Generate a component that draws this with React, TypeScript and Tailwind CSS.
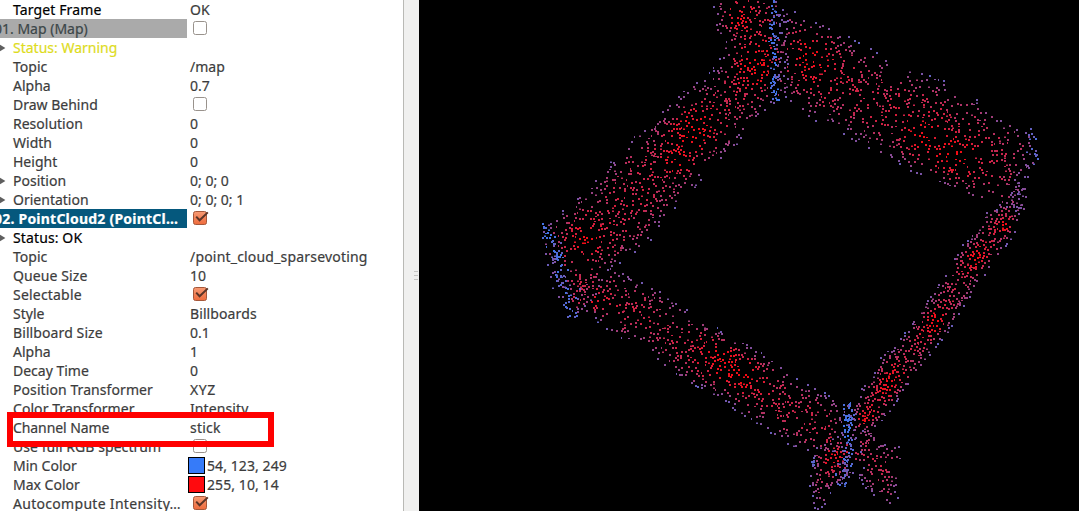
import React from "react";

type Pt = [number, number];
type Kind = "group" | "selected" | "warning" | "strong" | "plain";
interface Row {
  name: string;
  value?: string;
  check?: boolean;
  swatch?: "min" | "max";
  arrow?: boolean;
  kind?: Kind;
  track?: string;
  valueTrack?: string;
}

const rows: Row[] = [
  { name: "Target Frame", value: "OK", kind: "strong", track: "tracking-[0.12px]" },
  { name: "01. Map (Map)", check: false, kind: "group" },
  { name: "Status: Warning", arrow: true, kind: "warning" },
  { name: "Topic", value: "/map" },
  { name: "Alpha", value: "0.7" },
  { name: "Draw Behind", check: false },
  { name: "Resolution", value: "0" },
  { name: "Width", value: "0" },
  { name: "Height", value: "0" },
  { name: "Position", value: "0; 0; 0", arrow: true },
  { name: "Orientation", value: "0; 0; 0; 1", arrow: true },
  { name: "02. PointCloud2 (PointCl…", check: true, kind: "selected", track: "tracking-[0.22px]" },
  { name: "Status: OK", arrow: true, kind: "strong", track: "tracking-[0.12px]" },
  { name: "Topic", value: "/point_cloud_sparsevoting", valueTrack: "tracking-[0.19px]" },
  { name: "Queue Size", value: "10", track: "tracking-[0.1px]" },
  { name: "Selectable", check: true, track: "tracking-[0.2px]" },
  { name: "Style", value: "Billboards", valueTrack: "tracking-[0.1px]" },
  { name: "Billboard Size", value: "0.1", track: "tracking-[0.1px]" },
  { name: "Alpha", value: "1" },
  { name: "Decay Time", value: "0" },
  { name: "Position Transformer", value: "XYZ", track: "tracking-[0.08px]", valueTrack: "tracking-[0.6px]" },
  { name: "Color Transformer", value: "Intensity", track: "tracking-[0.06px]", valueTrack: "tracking-[0.1px]" },
  { name: "Channel Name", value: "stick", track: "-tracking-[0.08px]", valueTrack: "tracking-[0.2px]" },
  { name: "Use full RGB spectrum", check: false, track: "tracking-[0.06px]" },
  { name: "Min Color", value: "54, 123, 249", swatch: "min", valueTrack: "tracking-[0.08px]" },
  { name: "Max Color", value: "255, 10, 14", swatch: "max", valueTrack: "tracking-[0.08px]" },
  { name: "Autocompute Intensity…", check: true, track: "tracking-[0.3px]" },
];

const nameStyle: Record<Kind, string> = {
  group: "bg-[#aaaaaa] text-[#3c4648] pl-0",
  selected: "bg-[#05587d] text-white font-bold pl-0",
  warning: "text-[#dedc1e] pl-[13px]",
  strong: "text-black pl-[13px]",
  plain: "text-[#3c3c3c] pl-[13px]",
};

function CheckBox({ on }: { on: boolean }) {
  return (
    <svg width="17" height="15" viewBox="0 0 17 15" className="ml-[6px] block shrink-0">
      <defs>
        <linearGradient id="tick-fill" x1="0" y1="0" x2="0" y2="1">
          <stop offset="0" stopColor="#f69a74" />
          <stop offset="1" stopColor="#ee6b3c" />
        </linearGradient>
      </defs>
      <rect x="0.5" y="0.5" width="13" height="13" rx="2" fill={on ? "url(#tick-fill)" : "#fff"} stroke={on ? "#a5573a" : "#99928c"} />
      {on && <path d="M3.2 5.6 6.6 9.3 14.8 1.4" fill="none" stroke="#5b3427" strokeWidth="2" />}
    </svg>
  );
}

function PropertyRow({ row }: { row: Row }) {
  const kind = row.kind ?? "plain";
  const shifted = kind === "group" || kind === "selected";
  return (
    <div className="flex h-[19px] shrink-0">
      <div className={`relative flex h-[19px] w-[187px] items-center overflow-hidden whitespace-nowrap ${nameStyle[kind]}`}>
        {row.arrow && (
          <svg width="6" height="8" viewBox="0 0 6 8" className="absolute left-0 top-[6px]">
            <path d="M0 0.8 5.4 4 0 7.2z" fill="#5f5f5f" />
          </svg>
        )}
        <span className={`${shifted ? "-ml-[6px]" : ""} ${row.track ?? ""}`}>{row.name}</span>
      </div>
      <div className={`flex h-[19px] items-center whitespace-nowrap text-[#3c3c3c] ${row.value && !row.swatch ? "pl-[3px]" : ""}`}>
        {row.check !== undefined && <CheckBox on={row.check} />}
        {row.swatch && (
          <span className={`mr-[2px] ml-px h-[17px] w-[17px] border border-black ${row.swatch === "min" ? "bg-[#367bf9]" : "bg-[#ff0a0e]"}`} />
        )}
        <span className={row.valueTrack ?? ""}>{row.value}</span>
      </div>
    </div>
  );
}

/* ---------- point cloud ---------- */

const upperLeft: Pt[] = [[711, 0], [713, 32], [724, 36], [717, 62], [703, 78], [690, 83], [667, 104], [655, 116], [638, 130], [622, 147], [602, 169], [588, 184], [573, 198], [553, 216], [541, 224], [541, 245], [547, 268], [556, 278], [562, 302], [576, 316], [600, 290], [613, 268], [632, 254], [650, 241], [658, 226], [671, 211], [686, 194], [698, 183], [712, 165], [733, 147], [743, 134], [753, 123], [764, 111], [772, 103], [789, 96], [788, 0]];
const upperRight: Pt[] = [[776, 0], [787, 1], [797, 14], [805, 16], [840, 31], [853, 39], [868, 46], [890, 61], [922, 71], [955, 84], [975, 97], [990, 109], [1010, 120], [1020, 127], [1032, 130], [1037, 147], [1030, 162], [1024, 185], [1017, 206], [1000, 211], [984, 206], [960, 195], [935, 183], [912, 172], [895, 162], [872, 150], [848, 138], [835, 126], [810, 119], [798, 108], [785, 100], [774, 102]];
const right: Pt[] = [[1020, 180], [1021, 205], [1016, 227], [1010, 239], [1000, 253], [985, 275], [968, 298], [955, 319], [945, 335], [935, 346], [925, 361], [915, 373], [905, 388], [895, 402], [886, 415], [868, 432], [845, 428], [856, 399], [861, 387], [872, 374], [880, 355], [892, 348], [907, 328], [920, 309], [935, 288], [947, 267], [957, 250], [970, 236], [977, 224], [988, 209], [1004, 200]];
const lowerLeft: Pt[] = [[612, 266], [637, 280], [652, 285], [665, 294], [680, 305], [695, 315], [707, 321], [725, 332], [740, 340], [755, 349], [768, 355], [785, 366], [800, 382], [815, 386], [831, 397], [846, 404], [842, 450], [812, 453], [790, 445], [775, 436], [755, 422], [738, 413], [722, 398], [700, 388], [686, 382], [672, 373], [657, 360], [636, 343], [618, 338], [607, 330], [590, 316], [575, 308], [580, 280]];
const legs: Pt[] = [[812, 448], [808, 480], [811, 500], [816, 512], [825, 505], [830, 492], [840, 484], [855, 470], [863, 486], [876, 497], [890, 507], [899, 512], [897, 486], [905, 470], [900, 445], [889, 443], [879, 440], [872, 426], [844, 430], [830, 438]];

function createRandom(seed: number) {
  let s = seed;
  return () => {
    s = (s + 0x6d2b79f5) | 0;
    let t = Math.imul(s ^ (s >>> 15), 1 | s);
    t = (t + Math.imul(t ^ (t >>> 7), 61 | t)) ^ t;
    return ((t ^ (t >>> 14)) >>> 0) / 4294967296;
  };
}

function contains(poly: Pt[], x: number, y: number) {
  let inside = false;
  for (let i = 0, j = poly.length - 1; i < poly.length; j = i++) {
    const [ax, ay] = poly[i];
    const [bx, by] = poly[j];
    if (ay > y !== by > y && x < ((bx - ax) * (y - ay)) / (by - ay) + ax) inside = !inside;
  }
  return inside;
}

function segmentDistance(x: number, y: number, a: Pt, b: Pt) {
  const dx = b[0] - a[0];
  const dy = b[1] - a[1];
  const k = Math.max(0, Math.min(1, ((x - a[0]) * dx + (y - a[1]) * dy) / (dx * dx + dy * dy)));
  return Math.hypot(x - a[0] - k * dx, y - a[1] - k * dy);
}

function edgeDistance(poly: Pt[], x: number, y: number) {
  let best = 1e9;
  for (let i = 0, j = poly.length - 1; i < poly.length; j = i++) {
    if (poly[i][1] <= 0 && poly[j][1] <= 0) continue;
    best = Math.min(best, segmentDistance(x, y, poly[i], poly[j]));
  }
  return best;
}

// x, y, radius of the places with the strongest intensity
const hotSpots: [number, number, number][] = [
  [692, 130, 22], [757, 62, 24], [808, 55, 26], [950, 158, 24], [922, 138, 20], [584, 238, 16],
  [589, 300, 15], [724, 358, 26], [740, 373, 20], [830, 452, 16], [678, 158, 14], [735, 20, 14],
  [1005, 227, 10], [975, 255, 14], [932, 322, 16], [890, 382, 18], [865, 418, 14],
];

const STEPS = 24;

function buildCloud() {
  const rand = createRandom(4127);
  const bright: string[] = Array(STEPS + 1).fill("");
  const dim: string[] = Array(STEPS + 1).fill("");
  const placed = new Map<string, Pt[]>();

  const free = (x: number, y: number, gap: number) => {
    const cx = Math.floor(x / 8);
    const cy = Math.floor(y / 8);
    for (let i = -1; i <= 1; i++)
      for (let j = -1; j <= 1; j++)
        for (const p of placed.get(`${cx + i},${cy + j}`) ?? [])
          if (Math.hypot(p[0] - x, p[1] - y) < gap) return false;
    return true;
  };

  const put = (px: number, py: number, t: number) => {
    const x = Math.round(px);
    const y = Math.round(py);
    const key = `${Math.floor(x / 8)},${Math.floor(y / 8)}`;
    placed.set(key, [...(placed.get(key) ?? []), [x, y]]);
    const c = Math.round(Math.max(0, Math.min(1, t)) * STEPS);
    const shape = rand();
    if (shape < 0.8) bright[c] += `M${x} ${y}h2v2h-2z`;
    else if (shape < 0.92) {
      bright[c] += `M${x} ${y + 1}h2v1h-2z`;
      dim[c] += `M${x} ${y}h2v1h-2z`;
    } else if (shape < 0.96) bright[c] += `M${x} ${y}h2v1h-2z`;
    else bright[c] += `M${x} ${y}h1v2h-1z`;
  };

  const fill = (poly: Pt[], count: number, gap: number, falloff: number) => {
    const xs = poly.map((p) => p[0]);
    const ys = poly.map((p) => p[1]);
    const x0 = Math.min(...xs);
    const y0 = Math.min(...ys);
    const w = Math.max(...xs) - x0;
    const h = Math.max(...ys) - y0;
    let made = 0;
    for (let tries = 0; made < count && tries < 60000; tries++) {
      const x = x0 + rand() * w;
      const y = y0 + rand() * h;
      if (!contains(poly, x, y)) continue;
      const d = edgeDistance(poly, x, y);
      let heat = 0;
      for (const [hx, hy, r] of hotSpots) heat = Math.max(heat, Math.exp(-((x - hx) ** 2 + (y - hy) ** 2) / (r * r)));
      if (rand() > 0.42 + d / 50 + heat * 0.3 || !free(x, y, gap)) continue;
      put(x, y, 0.27 + 0.5 * (1 - Math.exp(-d / falloff)) + 0.26 * heat * Math.min(1, d / 9) + (rand() - 0.5) * 0.14);
      made++;
    }
  };

  const streak = (a: Pt, b: Pt, spread: number, count: number, t: number) => {
    for (let i = 0; i < count; i++) {
      const k = rand();
      put(a[0] + (b[0] - a[0]) * k + (rand() + rand() - 1) * spread, a[1] + (b[1] - a[1]) * k + (rand() - 0.5) * 3, t + rand() * 0.16);
    }
  };

  streak([772, 0], [774, 104], 5, 62, 0);
  streak([777, 0], [781, 90], 9, 30, 0.25);
  streak([542, 224], [557, 258], 8, 30, 0);
  streak([555, 255], [574, 316], 10, 38, 0.04);
  streak([550, 240], [566, 300], 12, 22, 0.22);
  streak([849, 402], [847, 440], 7, 42, 0);
  streak([849, 438], [840, 485], 9, 38, 0.08);
  streak([850, 405], [848, 480], 16, 26, 0.25);
  streak([813, 456], [812, 466], 2, 8, 0.1);
  streak([1031, 128], [1032, 165], 7, 13, 0.1);
  streak([1026, 162], [1014, 215], 9, 34, 0.3);

  fill(upperLeft, 920, 2, 10);
  fill(upperRight, 680, 2, 12);
  fill(right, 530, 1.9, 6);
  fill(lowerLeft, 590, 2, 9);
  fill(legs, 200, 1.9, 9);
  return { bright, dim };
}

function tone(step: number, gain: number) {
  const t = step / STEPS;
  const mix = (a: number, b: number) => Math.round((a + (b - a) * t) * gain);
  return `rgb(${mix(62, 253)},${mix(124, 12)},${mix(249, 22)})`;
}

const cloud = buildCloud();

function PointCloudView() {
  return (
    <svg width="660" height="511" viewBox="419 0 660 511" shapeRendering="crispEdges" className="block">
      {cloud.dim.map((d, i) => d && <path key={`d${i}`} d={d} fill={tone(i, 0.5)} />)}
      {cloud.bright.map((d, i) => d && <path key={`b${i}`} d={d} fill={tone(i, 0.96)} />)}
    </svg>
  );
}

export default function App() {
  return (
    <div className="relative flex h-[511px] w-[1079px] overflow-hidden bg-black font-['Noto_Sans','Open_Sans',sans-serif] text-[14px] leading-[19px] [-webkit-text-stroke:0.2px]">
      <div className="flex w-[404px] shrink-0 flex-col overflow-hidden border-r border-[#b9b9b5] bg-white">
        {rows.map((row, i) => (
          <PropertyRow key={i} row={row} />
        ))}
      </div>
      <div className="flex w-[15px] shrink-0 flex-col items-end justify-center gap-[3px] bg-[#f0f0ef] pt-[40px] pr-px">
        <span className="h-px w-[4px] bg-[#c4c4c2]" />
        <span className="h-px w-[4px] bg-[#c4c4c2]" />
        <span className="h-px w-[4px] bg-[#c4c4c2]" />
      </div>
      <PointCloudView />
      <div className="absolute left-[7px] top-[412px] h-[35px] w-[267px] border-[6px] border-[#ff0000]" />
    </div>
  );
}
